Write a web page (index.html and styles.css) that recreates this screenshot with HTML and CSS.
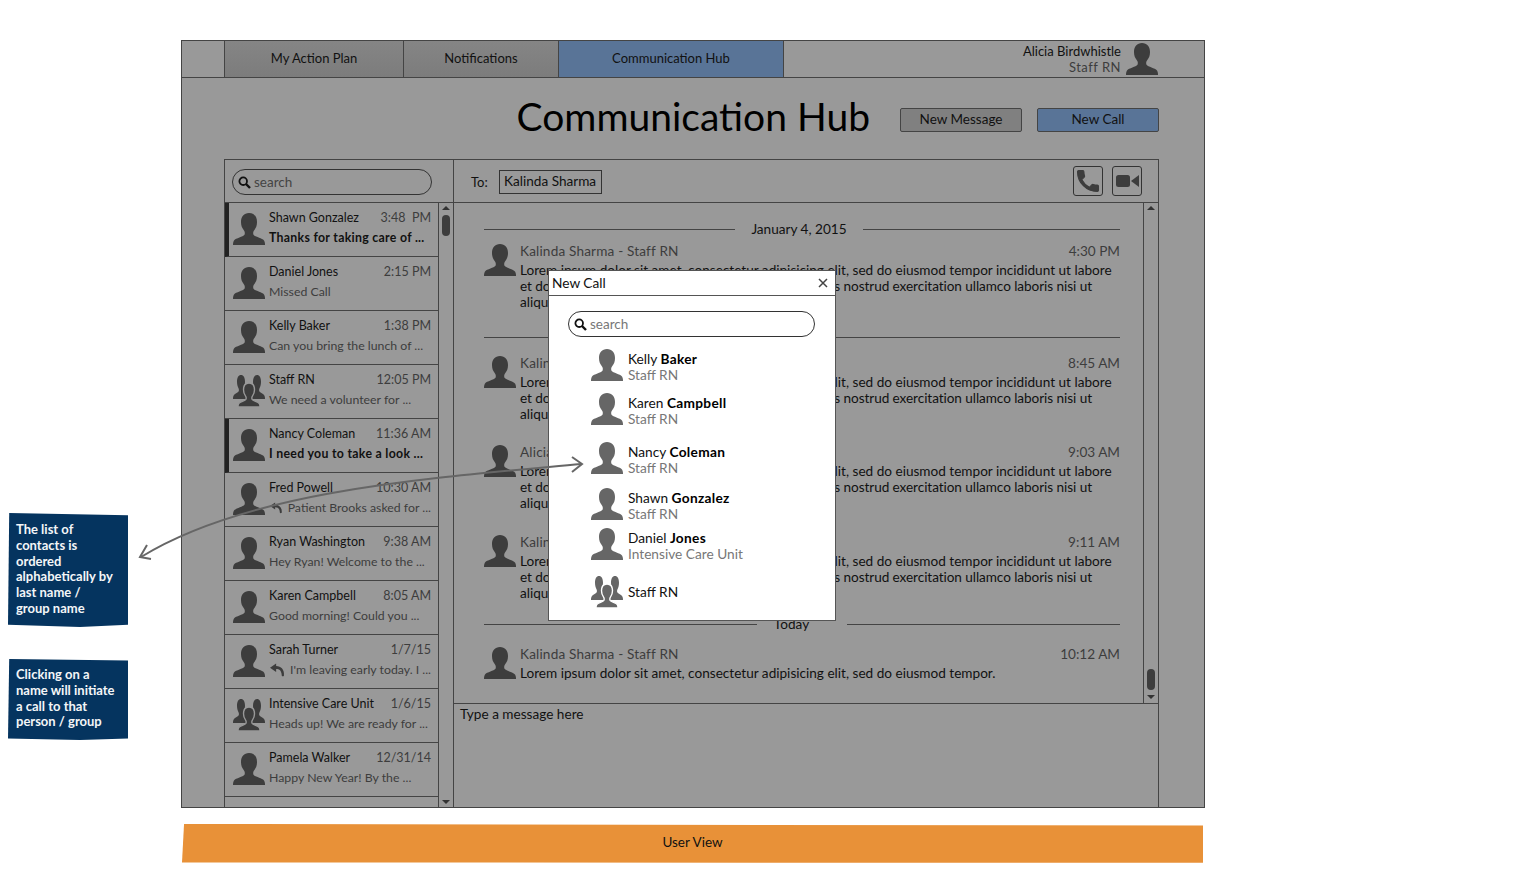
FILE: index.html
```html
<!DOCTYPE html>
<html>
  <head>
    <meta charset='utf-8'>
    <title>Communication Hub</title>
    <link rel="stylesheet" href="styles.css">
  </head>
  <body>
    <svg class="defs" width="0" height="0">
      <symbol id="person" viewBox="0 0 32 32" preserveAspectRatio="none">
        <path d="M16 0c-5 0-8 3.500-8 9 0 3.500 1 6 3 8.500 1 1.200 1 3 .5 4.300C10 24 3 25 1 27.500 0 29 0 31 0 32h32c0-1 0-3-1-4.500C29 25 22 24 20.500 21.800c-.5-1.300-.5-3.100.5-4.300 2-2.500 3-5 3-8.500 0-5.500-3-9-8-9z"/>
      </symbol>
      <symbol id="group" viewBox="0 0 32 32">
        <use href="#person" x="0" y="0" width="16" height="24"/>
        <use href="#person" x="16" y="0" width="16" height="24"/>
        <use class="front" href="#person" x="5" y="8" width="22" height="24"/>
      </symbol>
      <symbol id="reply" viewBox="0 0 16 16">
        <path d="M6.500 1 0 5.500 6.500 10V7c3.500 0 5.700 1.500 6 7 .1.800 2 .8 2.300 0 .7-6.500-3-10.200-8.300-10.200z"/>
      </symbol>
      <symbol id="lens" viewBox="0 0 13 13">
        <circle cx="5.200" cy="5.200" r="3.800" fill="none" stroke="currentColor" stroke-width="1.800"/>
        <path d="M8 8l4 4" stroke="currentColor" stroke-width="2.400"/>
      </symbol>
    </svg>

    <div class="stage">
      <div class="frame">
        <nav class="nav">
          <div class="nav-gap"></div>
          <a class="tab tab-plan">My Action Plan</a>
          <a class="tab tab-notes">Notifications</a>
          <a class="tab tab-hub">Communication Hub</a>
          <div class="user">
            <div class="user-text">
              <div>Alicia Birdwhistle</div>
              <div class="muted spaced">Staff RN</div>
            </div>
            <svg class="avatar"><use href="#person"/></svg>
          </div>
        </nav>

        <header class="heading">
          <h1>Communication Hub</h1>
          <button class="btn">New Message</button>
          <button class="btn btn-blue">New Call</button>
        </header>

        <section class="panel">
          <aside class="side">
            <div class="side-head">
              <div class="search">
                <svg class="lens"><use href="#lens"/></svg>
                <span>search</span>
              </div>
            </div>
            <div class="side-body">
              <ul class="contacts">
                <li class="contact unread">
                  <svg class="avatar"><use href="#person"/></svg>
                  <div class="contact-text">
                    <div class="contact-top"><span>Shawn Gonzalez</span><span class="time">3:48&nbsp; PM</span></div>
                    <div class="snippet">Thanks for taking care of ...</div>
                  </div>
                </li>
                <li class="contact">
                  <svg class="avatar"><use href="#person"/></svg>
                  <div class="contact-text">
                    <div class="contact-top"><span>Daniel Jones</span><span class="time">2:15 PM</span></div>
                    <div class="snippet">Missed Call</div>
                  </div>
                </li>
                <li class="contact">
                  <svg class="avatar"><use href="#person"/></svg>
                  <div class="contact-text">
                    <div class="contact-top"><span>Kelly Baker</span><span class="time">1:38 PM</span></div>
                    <div class="snippet">Can you bring the lunch of ...</div>
                  </div>
                </li>
                <li class="contact">
                  <svg class="avatar"><use href="#group"/></svg>
                  <div class="contact-text">
                    <div class="contact-top"><span>Staff RN</span><span class="time">12:05 PM</span></div>
                    <div class="snippet">We need a volunteer for ...</div>
                  </div>
                </li>
                <li class="contact unread">
                  <svg class="avatar"><use href="#person"/></svg>
                  <div class="contact-text">
                    <div class="contact-top"><span>Nancy Coleman</span><span class="time">11:36 AM</span></div>
                    <div class="snippet">I need you to take a look ...</div>
                  </div>
                </li>
                <li class="contact">
                  <svg class="avatar"><use href="#person"/></svg>
                  <div class="contact-text">
                    <div class="contact-top"><span>Fred Powell</span><span class="time">10:30 AM</span></div>
                    <div class="snippet"><svg class="reply"><use href="#reply"/></svg>Patient Brooks asked for ...</div>
                  </div>
                </li>
                <li class="contact">
                  <svg class="avatar"><use href="#person"/></svg>
                  <div class="contact-text">
                    <div class="contact-top"><span>Ryan Washington</span><span class="time">9:38 AM</span></div>
                    <div class="snippet">Hey Ryan! Welcome to the ...</div>
                  </div>
                </li>
                <li class="contact">
                  <svg class="avatar"><use href="#person"/></svg>
                  <div class="contact-text">
                    <div class="contact-top"><span>Karen Campbell</span><span class="time">8:05 AM</span></div>
                    <div class="snippet">Good morning! Could you ...</div>
                  </div>
                </li>
                <li class="contact">
                  <svg class="avatar"><use href="#person"/></svg>
                  <div class="contact-text">
                    <div class="contact-top"><span>Sarah Turner</span><span class="time">1/7/15</span></div>
                    <div class="snippet"><svg class="reply"><use href="#reply"/></svg>I'm leaving early today. I ...</div>
                  </div>
                </li>
                <li class="contact">
                  <svg class="avatar"><use href="#group"/></svg>
                  <div class="contact-text">
                    <div class="contact-top"><span>Intensive Care Unit</span><span class="time">1/6/15</span></div>
                    <div class="snippet">Heads up! We are ready for ...</div>
                  </div>
                </li>
                <li class="contact">
                  <svg class="avatar"><use href="#person"/></svg>
                  <div class="contact-text">
                    <div class="contact-top"><span>Pamela Walker</span><span class="time">12/31/14</span></div>
                    <div class="snippet">Happy New Year! By the ...</div>
                  </div>
                </li>
              </ul>
              <div class="scroll">
                <i class="up"></i>
                <i class="thumb thumb-top"></i>
                <i class="down"></i>
              </div>
            </div>
          </aside>

          <div class="main">
            <div class="main-head">
              <span class="to">To:</span>
              <span class="to-box">Kalinda Sharma</span>
              <div class="call-btns">
                <button class="icon-btn">
                  <svg viewBox="0 0 24 24" width="30" height="30"><path stroke="#3d3d3d" stroke-width=".9" d="M6.620 10.790c1.440 2.830 3.760 5.140 6.590 6.590l2.200-2.200c.27-.27.67-.36 1.020-.24 1.120.37 2.330.57 3.570.57.55 0 1 .45 1 1V20c0 .55-.45 1-1 1-9.390 0-17-7.610-17-17 0-.55.45-1 1-1h3.500c.55 0 1 .45 1 1 0 1.250.2 2.450.57 3.570.11.35.03.74-.25 1.020l-2.200 2.200z"/></svg>
                </button>
                <button class="icon-btn">
                  <svg viewBox="0 0 23 12" width="23" height="12"><rect x="0" y="0" width="14" height="12" rx="2.500"/><path d="M15 6l8-6v12z"/></svg>
                </button>
              </div>
            </div>
            <div class="thread">
              <div class="messages">
                <div class="day"><span>January 4, 2015</span></div>
                <article class="msg msg-first">
                  <svg class="avatar"><use href="#person"/></svg>
                  <div class="msg-text">
                    <div class="msg-top muted"><span>Kalinda Sharma - Staff RN</span><span>4:30 PM</span></div>
                    <p>Lorem ipsum dolor sit amet, consectetur adipisicing elit, sed do eiusmod tempor incididunt ut labore<br><span class="tight">et dolore magna aliqua. Ut enim ad minim veniam, quis nostrud exercitation ullamco laboris nisi ut</span><br>aliquip ex ea commodo consequat.</p>
                  </div>
                </article>
                <hr class="rule">
                <article class="msg msg-second">
                  <svg class="avatar"><use href="#person"/></svg>
                  <div class="msg-text">
                    <div class="msg-top muted"><span>Kalinda Sharma - Staff RN</span><span>8:45 AM</span></div>
                    <p>Lorem ipsum dolor sit amet, consectetur adipisicing elit, sed do eiusmod tempor incididunt ut labore<br><span class="tight">et dolore magna aliqua. Ut enim ad minim veniam, quis nostrud exercitation ullamco laboris nisi ut</span><br>aliquip ex ea commodo consequat.</p>
                  </div>
                </article>
                <article class="msg msg-third">
                  <svg class="avatar"><use href="#person"/></svg>
                  <div class="msg-text">
                    <div class="msg-top muted"><span>Alicia Birdwhistle - Staff RN</span><span>9:03 AM</span></div>
                    <p>Lorem ipsum dolor sit amet, consectetur adipisicing elit, sed do eiusmod tempor incididunt ut labore<br><span class="tight">et dolore magna aliqua. Ut enim ad minim veniam, quis nostrud exercitation ullamco laboris nisi ut</span><br>aliquip ex ea commodo consequat.</p>
                  </div>
                </article>
                <article class="msg">
                  <svg class="avatar"><use href="#person"/></svg>
                  <div class="msg-text">
                    <div class="msg-top muted"><span>Kalinda Sharma - Staff RN</span><span>9:11 AM</span></div>
                    <p>Lorem ipsum dolor sit amet, consectetur adipisicing elit, sed do eiusmod tempor incididunt ut labore<br><span class="tight">et dolore magna aliqua. Ut enim ad minim veniam, quis nostrud exercitation ullamco laboris nisi ut</span><br>aliquip ex ea commodo consequat.</p>
                  </div>
                </article>
                <div class="day day-today"><span>Today</span></div>
                <article class="msg msg-last">
                  <svg class="avatar"><use href="#person"/></svg>
                  <div class="msg-text">
                    <div class="msg-top muted"><span>Kalinda Sharma - Staff RN</span><span>10:12 AM</span></div>
                    <p>Lorem ipsum dolor sit amet, consectetur adipisicing elit, sed do eiusmod tempor.</p>
                  </div>
                </article>
              </div>
              <div class="scroll scroll-main">
                <i class="up"></i>
                <i class="thumb thumb-bottom"></i>
                <i class="down"></i>
              </div>
            </div>
            <div class="compose">Type a message here</div>
          </div>
        </section>
      </div>

      <div class="user-view">User View</div>
    </div>

    <!-- notes and overlays -->
    <div class="note note-list">The list of<br>contacts is<br>ordered<br>alphabetically by<br>last name /<br>group name</div>
    <div class="note note-click">Clicking on a<br>name will initiate<br>a call to that<br>person / group</div>

    <div class="modal">
      <div class="modal-head">
        <span>New Call</span>
        <svg class="close" viewBox="0 0 10 10" width="10" height="10"><path d="M1 1l8 8M9 1l-8 8"/></svg>
      </div>
      <div class="search search-modal">
        <svg class="lens"><use href="#lens"/></svg>
        <span>search</span>
      </div>
      <ul class="people">
        <li class="person">
          <svg class="avatar"><use href="#person"/></svg>
          <div>Kelly <b>Baker</b><div class="sub">Staff RN</div></div>
        </li>
        <li class="person">
          <svg class="avatar"><use href="#person"/></svg>
          <div>Karen <b>Campbell</b><div class="sub">Staff RN</div></div>
        </li>
        <li class="person">
          <svg class="avatar"><use href="#person"/></svg>
          <div>Nancy <b>Coleman</b><div class="sub">Staff RN</div></div>
        </li>
        <li class="person">
          <svg class="avatar"><use href="#person"/></svg>
          <div>Shawn <b>Gonzalez</b><div class="sub">Staff RN</div></div>
        </li>
        <li class="person">
          <svg class="avatar"><use href="#person"/></svg>
          <div>Daniel <b>Jones</b><div class="sub">Intensive Care Unit</div></div>
        </li>
        <li class="person">
          <svg class="avatar"><use href="#group"/></svg>
          <div>Staff RN</div>
        </li>
      </ul>
    </div>

    <svg class="pointer" width="1514" height="875" viewBox="0 0 1514 875">
      <path d="M581 464C430 478 250 490 141 557"/>
      <path d="M572 457l10 7-10 8"/>
      <path d="M147 545l-7 12 11 2"/>
    </svg>
  </body>
</html>
```

FILE: styles.css
```css
html, body, h1, p, ul {
    margin: 0;
    padding: 0;
}
body {
    position: relative;
    width: 1514px;
    height: 875px;
    overflow: hidden;
    background: #fff;
    color: #111;
    font-family: Lato, "Open Sans", sans-serif;
    font-size: 13px;
    line-height: 16px;
}
ul {
    list-style: none;
}
.defs {
    position: absolute;
}
.muted {
    color: #3d3d3d;
}
.spaced {
    letter-spacing: .5px;
}
.avatar {
    width: 32px;
    height: 32px;
    flex: none;
    fill: #3d3d3d;
}
.front {
    stroke: var(--halo, #999);
    stroke-width: 2;
}
.stage {
    padding: 40px 0 0 181px;
}
.frame {
    box-sizing: border-box;
    width: 1024px;
    height: 768px;
    border: 1px solid #444;
    background: #999;
    overflow: hidden;
}

/* top nav */
.nav {
    display: flex;
    height: 37px;
    box-sizing: border-box;
    border-bottom: 1px solid #444;
}
.nav-gap {
    width: 42px;
    border-right: 1px solid #444;
}
.tab {
    display: flex;
    align-items: center;
    justify-content: center;
    box-sizing: border-box;
    padding-bottom: 2px;
    border-right: 1px solid #444;
    background: linear-gradient(#858585, #7c7c7c);
}
.tab-plan {
    width: 179px;
}
.tab-notes {
    width: 155px;
}
.tab-hub {
    width: 225px;
    background: #597497;
}
.user {
    flex: 1;
    display: flex;
    justify-content: flex-end;
    padding: 2px 46px 0 0;
    gap: 5px;
}
.user-text {
    text-align: right;
}

/* title row */
.heading {
    display: flex;
    align-items: center;
    justify-content: flex-end;
    height: 81px;
    padding-right: 45px;
}
h1 {
    font-size: 39px;
    line-height: 44px;
    font-weight: 400;
    color: #000;
    margin: -6px 15px 0 0;
}
.btn {
    box-sizing: border-box;
    width: 122px;
    height: 24px;
    margin: 3px 0 0 15px;
    padding: 0 0 2px;
    border: 1px solid #444;
    border-radius: 2px;
    background: #808080;
    color: #111;
    font: inherit;
    font-size: 13.500px;
}
.btn-blue {
    background: #597497;
}

/* panel */
.panel {
    display: flex;
    box-sizing: border-box;
    width: 935px;
    height: 649px;
    margin-left: 42px;
    border: 1px solid #444;
    border-bottom: 0;
}
.side {
    box-sizing: border-box;
    width: 229px;
    border-right: 1px solid #444;
}
.side-head {
    box-sizing: border-box;
    height: 43px;
    padding: 9px 0 0 7px;
    border-bottom: 1px solid #444;
}
.search {
    display: flex;
    align-items: center;
    box-sizing: border-box;
    width: 200px;
    height: 26px;
    padding-left: 5px;
    gap: 3px;
    border: 1px solid #333;
    border-radius: 13px;
    color: #444;
    font-size: 13.500px;
}
.lens {
    width: 13px;
    height: 13px;
    color: #111;
}
.side-body {
    display: flex;
    height: 605px;
}
.contacts {
    width: 213px;
    box-sizing: border-box;
}
.contact {
    position: relative;
    display: flex;
    box-sizing: border-box;
    height: 54px;
    padding: 10px 7px 0 8px;
    gap: 4px;
    border-bottom: 1px solid #444;
}
.contact-text {
    flex: 1;
    min-width: 0;
    margin-top: -3px;
    font-size: 12.500px;
}
.contact-top {
    display: flex;
    justify-content: space-between;
}
.time {
    color: #3d3d3d;
}
.snippet {
    display: flex;
    align-items: center;
    margin-top: 4px;
    color: #3d3d3d;
    font-size: 12.300px;
    white-space: nowrap;
}
.unread {
    border-left: 4px solid #222;
    padding-left: 4px;
}
.unread .snippet {
    color: #111;
    font-weight: 700;
    letter-spacing: .3px;
}
.reply {
    width: 16px;
    height: 16px;
    margin: 0 5px 0 1px;
    fill: #3d3d3d;
}
.scroll {
    position: relative;
    box-sizing: border-box;
    width: 15px;
    border-left: 1px solid #444;
}
.scroll .up, .scroll .down {
    position: absolute;
    left: 3px;
    width: 0;
    height: 0;
    border: 4px solid transparent;
}
.scroll .up {
    top: -1px;
    border-bottom-color: #333;
}
.scroll .down {
    bottom: 0;
    border-top-color: #333;
}
.thumb {
    position: absolute;
    left: 3px;
    width: 8px;
    height: 21px;
    border-radius: 4px;
    background: #3d3d3d;
}
.thumb-top {
    top: 12px;
}
.thumb-bottom {
    bottom: 13px;
}

/* conversation */
.main {
    flex: 1;
    min-width: 0;
    font-size: 13.600px;
}
.main-head {
    display: flex;
    align-items: center;
    box-sizing: border-box;
    height: 43px;
    padding-left: 17px;
    border-bottom: 1px solid #444;
}
.to {
    width: 28px;
    margin-top: 2px;
    font-size: 13px;
}
.to-box {
    box-sizing: border-box;
    height: 24px;
    margin-top: 1px;
    padding: 2px 5px 0 4px;
    border: 1px solid #333;
}
.call-btns {
    display: flex;
    gap: 9px;
    margin-left: auto;
    margin-right: 16px;
}
.icon-btn {
    display: flex;
    align-items: center;
    justify-content: center;
    box-sizing: border-box;
    width: 30px;
    height: 30px;
    padding: 0;
    border: 1px solid #333;
    border-radius: 3px;
    background: #999;
    fill: #3d3d3d;
}
.thread {
    display: flex;
    box-sizing: border-box;
    height: 501px;
    border-bottom: 1px solid #444;
}
.messages {
    box-sizing: border-box;
    width: 689px;
    padding: 17px 23px 0 30px;
}
.day {
    display: flex;
    align-items: center;
    height: 18px;
    gap: 16.500px;
}
.day::before, .day::after {
    content: "";
    flex: 251;
    border-top: 1px solid #444;
}
.day::after {
    flex: 257;
}
.day-today {
    margin-top: 14px;
}
.day-today::before, .day-today::after {
    flex: 1;
}
.day-today span {
    margin-right: 21px;
}
.msg {
    display: flex;
    gap: 4px;
    margin-top: 23px;
}
.msg .avatar {
    margin-top: 1px;
}
.msg-first {
    margin-top: 5px;
}
.msg-second {
    margin-top: 17px;
}
.msg-third {
    margin-top: 22px;
}
.msg-last {
    margin-top: 13px;
}
.msg-text {
    flex: 1;
    min-width: 0;
}
.msg-top {
    display: flex;
    justify-content: space-between;
    margin-bottom: 3px;
}
.msg-top span:first-child {
    letter-spacing: .17px;
}
.tight {
    letter-spacing: -.07px;
}
.rule {
    margin: 27px 0 0;
    border: 0;
    border-top: 1px solid #444;
}
.compose {
    padding: 2px 6px;
}

/* callouts and footer */
.user-view {
    display: flex;
    align-items: center;
    justify-content: center;
    box-sizing: border-box;
    width: 1021px;
    height: 40px;
    margin: 16px 0 0 1px;
    padding-bottom: 5px;
    background: #e89138;
    font-size: 13.500px;
    clip-path: polygon(0.2% 0, 100% 4%, 100% 97%, 0 96%);
}
.note {
    position: absolute;
    left: 8px;
    width: 104px;
    padding: 9px 8px 0;
    background: #05345f;
    color: #f4f6f8;
    font-weight: 700;
    font-size: 13px;
    line-height: 15.800px;
    clip-path: polygon(1% 0, 100% 2%, 100% 98%, 60% 100%, 0 98%);
}
.note-list {
    top: 513px;
    height: 105px;
}
.note-click {
    top: 659px;
    height: 73px;
    padding-top: 8px;
}

/* new call popup */
.modal {
    position: absolute;
    left: 548px;
    top: 270px;
    box-sizing: border-box;
    width: 288px;
    height: 351px;
    background: #fff;
    border: 1px solid #555;
    font-size: 13.700px;
}
.modal-head {
    display: flex;
    align-items: center;
    justify-content: space-between;
    box-sizing: border-box;
    height: 25px;
    padding: 0 7px 0 3px;
    border-bottom: 1px solid #555;
}
.close {
    fill: none;
    stroke: #444;
    stroke-width: 1.500;
}
.search-modal {
    width: 247px;
    margin: 15px 0 0 19px;
}
.search-modal span {
    color: #777;
}
.people {
    margin-top: 12px;
}
.person {
    display: flex;
    align-items: flex-start;
    gap: 5px;
    padding-left: 42px;
    height: 44px;
}
.person:nth-child(2) {
    height: 49px;
}
.person:nth-child(3) {
    height: 46px;
}
.person:nth-child(4) {
    height: 40px;
}
.person:nth-child(5) {
    height: 39px;
}
.person:last-child {
    align-items: center;
    height: 32px;
    margin-top: 9px;
}
.person .avatar {
    fill: #666;
    --halo: #fff;
}
.person .sub {
    color: #777;
}
.person b {
    color: #000;
    letter-spacing: .3px;
}
.person > div {
    padding-top: 2px;
}
.person:last-child > div {
    padding-top: 0;
}
.pointer {
    position: absolute;
    left: 0;
    top: 0;
    fill: none;
    stroke: #666;
    stroke-width: 2;
    pointer-events: none;
}
```
